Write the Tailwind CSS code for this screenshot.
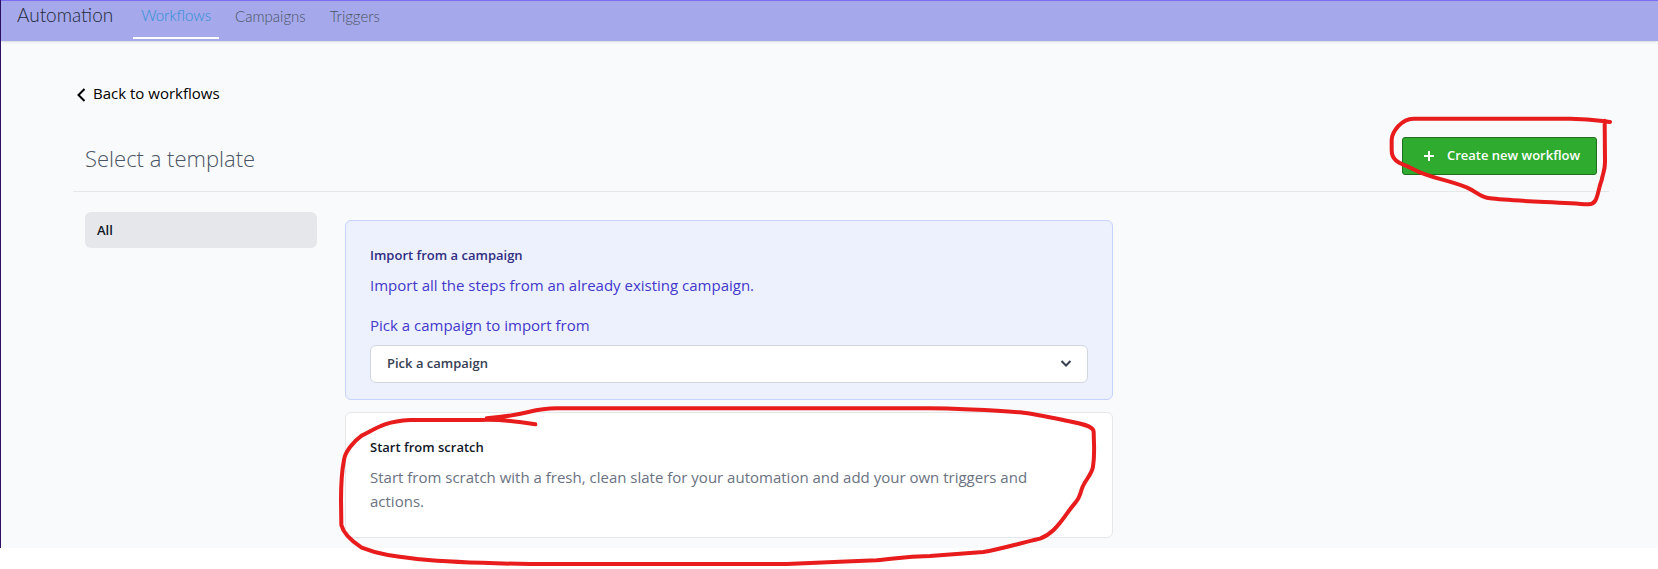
<!DOCTYPE html>
<html lang="en">
<head>
    <meta charset="UTF-8">
    <meta name="viewport" content="width=device-width, initial-scale=1.0">
    <title>Automation - Select a template</title>
    <script src="https://cdn.jsdelivr.net/npm/@tailwindcss/browser@4"></script>
</head>
<body class="min-h-screen bg-white font-['Open_Sans',sans-serif]">

    <div class="border-l border-[#2e1065] bg-[#f9fafc] pb-[10px]">

        <!-- Top bar -->
        <header class="flex h-[41px] border-t border-[#7c6cf2] bg-[#a5a8ea] pl-4 font-['Lato',sans-serif] shadow">
            <h1 class="mr-5 pt-px text-[19px] leading-[26px] font-light text-gray-800">Automation</h1>
            <nav class="flex gap-2 text-[15px] leading-7 font-light">
                <a href="#" class="mb-[2px] border-b-2 border-white px-2 text-[#2f8fd8]">Workflows</a>
                <a href="#" class="px-2 pt-px text-gray-600">Campaigns</a>
                <a href="#" class="px-2 pt-px text-gray-600">Triggers</a>
            </nav>
        </header>

        <main class="pt-10 pr-[49px] pl-[72px]">
            <a href="#" class="flex items-center gap-2 pl-1 text-[15px] leading-6 text-black">
                <svg class="mt-1 h-[14px] w-2" viewBox="0 0 8 14" fill="none" stroke="currentColor" stroke-width="2"><path d="M7.500 1L1.500 7L7.500 13"/></svg>
                Back to workflows
            </a>

            <div class="mt-7 flex items-center justify-between border-b border-gray-200 px-3 pt-1 pb-4">
                <h2 class="pt-1 text-[22px] leading-8 font-light text-gray-600">Select a template</h2>
                <div class="relative">
                    <button type="button" class="flex h-[38px] items-center gap-3 rounded-[3px] border border-[#1f6f1f] bg-[#2fac2f] pr-4 pl-5 text-[13px] font-semibold text-white">
                        <svg class="h-3 w-3" viewBox="0 0 12 12" fill="none" stroke="currentColor" stroke-width="2"><path d="M6 1v10M1 6h10"/></svg>
                        Create new workflow
                    </button>
                    <!-- Marker around the button -->
                    <svg class="pointer-events-none absolute -top-[37px] -right-[61px] h-[120px] w-[288px]" viewBox="0 0 864 360" fill="none" stroke="#e81c1c" stroke-width="12" stroke-linecap="round" stroke-linejoin="round">
                        <path d="M720 66C690 62 660 56 600 56H130C95 56 66 95 65 120V150C65 190 100 190 130 208C180 235 220 235 290 262C320 275 330 292 360 295C420 303 560 306 655 313C685 313 680 280 695 240C700 215 706 210 705 180L704 62"/>
                    </svg>
                </div>
            </div>

            <div class="flex gap-7 px-3 pt-5">
                <aside class="w-[232px] shrink-0">
                    <a href="#" class="block rounded-md bg-gray-200 px-3 py-2 text-[13px] leading-5 font-semibold text-gray-900">All</a>
                </aside>

                <div class="w-full max-w-3xl space-y-3 pt-2">
                    <section class="rounded-md border border-[#c7d2fe] bg-[#edf1fe] px-6 pt-6 pb-4">
                        <h3 class="text-[13px] leading-5 font-semibold text-[#312e81]">Import from a campaign</h3>
                        <p class="mt-2 text-[15px] leading-6 text-[#4338ca]">Import all the steps from an already existing campaign.</p>
                        <label for="campaign" class="mt-4 block text-[15px] leading-6 text-[#4338ca]">Pick a campaign to import from</label>
                        <div class="relative mt-2">
                            <select id="campaign" class="block h-[38px] w-full appearance-none rounded-md border border-gray-300 bg-white px-4 text-[13px] font-semibold text-gray-700">
                                <option>Pick a campaign</option>
                            </select>
                            <svg class="pointer-events-none absolute top-3 right-4 h-3 w-3" viewBox="0 0 12 12" fill="none" stroke="#374151" stroke-width="2"><path d="M1.500 4L6 8.500L10.500 4"/></svg>
                        </div>
                    </section>

                    <section class="relative rounded-md border border-gray-200 bg-white p-6">
                        <h3 class="text-[13px] leading-5 font-semibold text-gray-900">Start from scratch</h3>
                        <p class="mt-2 max-w-2xl text-[15px] leading-6 text-gray-500">Start from scratch with a fresh, clean slate for your automation and add your own triggers and actions.</p>
                        <!-- Marker around the card -->
                        <svg class="pointer-events-none absolute -top-[13px] -left-4 h-[169px] w-[840px]" viewBox="0 0 2520 507" fill="none" stroke="#e81c1c" stroke-width="12" stroke-linecap="round" stroke-linejoin="round">
                            <path d="M616 73C570 65 500 58 450 60H240C160 65 140 85 95 107C70 125 45 155 42 180C35 215 33 260 33 300L34 375C40 400 60 420 95 443C150 465 200 470 270 478C370 488 460 490 600 492H1370C1450 488 1550 484 1640 481C1700 476 1720 470 1800 468L1960 456C2010 448 2060 432 2130 416C2160 405 2180 385 2215 335C2240 300 2245 305 2256 265C2265 240 2285 225 2289 200C2295 160 2292 150 2291 95C2290 75 2240 68 2200 60C2150 50 2110 42 2070 37C1990 30 1850 25 1800 25H680C600 25 600 45 470 55"/>
                        </svg>
                    </section>
                </div>
            </div>
        </main>
    </div>

</body>
</html>
